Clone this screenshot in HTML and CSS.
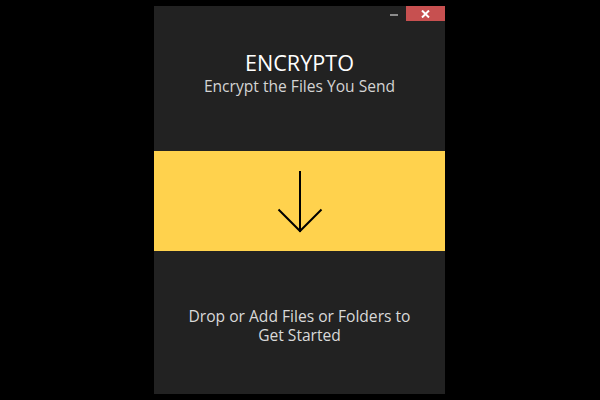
FILE: index.html
```html
<!DOCTYPE html>
<html>
<head>
<meta charset="utf-8">
<link rel="stylesheet" href="styles.css">
</head>
<body>
<div class="window">
  <div class="titlebar">
    <div class="btn-min"><span class="min-glyph"></span></div>
    <div class="btn-close">
      <svg width="9" height="8" viewBox="0 0 9 8"><path d="M1 0.5 L8 7.5 M8 0.5 L1 7.5" stroke="#ffffff" stroke-width="2" fill="none"/></svg>
    </div>
  </div>
  <div class="header">
    <div class="title">ENCRYPTO</div>
    <div class="subtitle">Encrypt the Files You Send</div>
  </div>
  <div class="drop">
    <svg width="50" height="64" viewBox="0 0 50 64"><path d="M25 0 L25 61 M3.5 38.5 L25 60 L46.5 38.5" stroke="#000" stroke-width="2" fill="none"/></svg>
  </div>
  <div class="footer">
    <div class="hint">Drop or Add Files or Folders to Get Started</div>
  </div>
</div>
</body>
</html>
```
FILE: styles.css
```css
html, body {
  margin: 0;
  padding: 0;
  background: #000;
  width: 600px;
  height: 400px;
  overflow: hidden;
}
.window {
  margin: 6px 0 0 154px;
  width: 291px;
  height: 388px;
  background: #222222;
  display: flex;
  flex-direction: column;
  font-family: "Open Sans", "Noto Sans", sans-serif;
}
.titlebar {
  height: 15px;
  display: flex;
  justify-content: flex-end;
}
.btn-min {
  width: 24px;
  display: flex;
  justify-content: center;
  align-items: flex-end;
  padding-bottom: 5px;
  box-sizing: border-box;
}
.min-glyph {
  width: 8px;
  height: 2px;
  background: #8c8c8c;
}
.btn-close {
  width: 39px;
  background: #c75050;
  display: flex;
  justify-content: center;
  align-items: center;
}
.header {
  height: 130px;
  box-sizing: border-box;
  padding-top: 28px;
  text-align: center;
}
.title {
  color: #ffffff;
  font-size: 21.6px;
  line-height: 27px;
}
.subtitle {
  color: #d4d4d4;
  font-size: 15.6px;
  line-height: 20px;
}
.drop {
  height: 100px;
  background: #ffd24d;
  display: flex;
  justify-content: center;
  align-items: flex-start;
  padding-top: 20px;
  box-sizing: border-box;
}
.footer {
  flex: 1;
  text-align: center;
  padding-top: 56px;
}
.hint {
  width: 232px;
  margin: 0 auto;
  color: #d9d9d9;
  font-size: 15.6px;
  line-height: 19px;
}
```
